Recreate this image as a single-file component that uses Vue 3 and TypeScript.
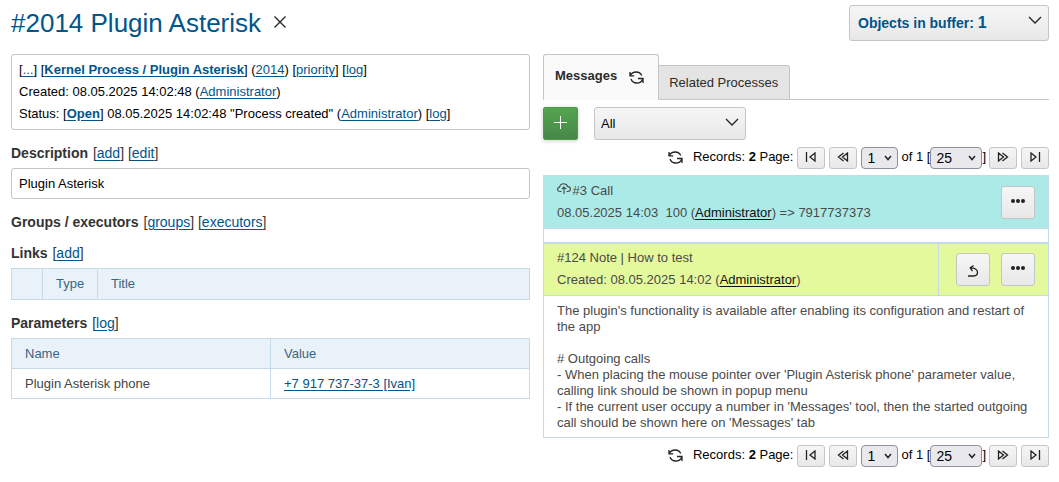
<script setup lang="ts">
import { ref } from 'vue'

const filters = ['All', 'Calls', 'Notes']
const filter = ref('All')
const page = ref('1')
const pageSize = ref('25')
const pagers = ['top', 'bottom']

const noteText = `The plugin's functionality is available after enabling its configuration and restart of the app

# Outgoing calls
- When placing the mouse pointer over 'Plugin Asterisk phone' parameter value, calling link should be shown in popup menu
- If the current user occupy a number in 'Messages' tool, then the started outgoing call should be shown here on 'Messages' tab`
</script>

<template>
  <div class="page">
    <header class="top">
      <h1>#2014 Plugin Asterisk</h1>
      <button class="plain" type="button" aria-label="Close">
        <svg width="12" height="12" viewBox="0 0 12 12"><path d="M.5.5l11 11M11.5.5l-11 11" /></svg>
      </button>
      <button class="btn buffer" type="button">
        <span>Objects in buffer: <b>1</b></span>
        <svg width="14" height="8" viewBox="0 0 14 8"><path d="M1 1l6 6 6-6" /></svg>
      </button>
    </header>

    <main class="columns">
      <section class="left">
        <div class="box info">
          <div>[<a href="#">...</a>] [<a href="#"><b>Kernel Process / Plugin Asterisk</b></a>] (<a href="#">2014</a>) [<a href="#">priority</a>] [<a href="#">log</a>]</div>
          <div>Created: 08.05.2025 14:02:48 (<a href="#">Administrator</a>)</div>
          <div>Status: [<a href="#"><b>Open</b></a>] 08.05.2025 14:02:48 "Process created" (<a href="#">Administrator</a>) [<a href="#">log</a>]</div>
        </div>

        <h2>Description <span>[<a href="#">add</a>] [<a href="#">edit</a>]</span></h2>
        <div class="box description">Plugin Asterisk</div>

        <h2 class="alone">Groups / executors <span>[<a href="#">groups</a>] [<a href="#">executors</a>]</span></h2>

        <h2>Links <span>[<a href="#">add</a>]</span></h2>
        <table class="grid links">
          <thead>
            <tr><th class="mark"></th><th class="type">Type</th><th>Title</th></tr>
          </thead>
        </table>

        <h2>Parameters <span>[<a href="#">log</a>]</span></h2>
        <table class="grid params">
          <thead>
            <tr><th>Name</th><th>Value</th></tr>
          </thead>
          <tbody>
            <tr><td>Plugin Asterisk phone</td><td><a href="#">+7 917 737-37-3 [Ivan]</a></td></tr>
          </tbody>
        </table>
      </section>

      <section class="right">
        <nav class="tabs">
          <button class="tab active" type="button">
            Messages
            <svg class="reload" width="15" height="13" viewBox="0 0 15 13"><path d="M1 1v3.8h4.2M1.3 4.5C2.5 2 4.8 1 7.2 1c2.6 0 4.6 1.3 5.500 3.500M14 12V7.500H9M13.700 8.200c-1 2.600-3.300 3.800-6 3.800-2.800 0-4.800-1.500-5.700-4" /></svg>
          </button>
          <button class="tab" type="button">Related Processes</button>
        </nav>

        <div class="tools">
          <button class="add" type="button" aria-label="Add message">
            <svg width="13" height="13" viewBox="0 0 13 13"><path d="M6.500 0v13M0 6.500h13" /></svg>
          </button>
          <label class="filter">
            <select v-model="filter" class="btn" aria-label="Message filter">
              <option v-for="f in filters" :key="f">{{ f }}</option>
            </select>
            <svg width="14" height="8" viewBox="0 0 14 8"><path d="M1 1l6 6 6-6" /></svg>
          </label>
        </div>

        <template v-for="p in pagers" :key="p">
          <div class="pager">
            <button class="plain" type="button" aria-label="Refresh">
              <svg class="reload" width="15" height="13" viewBox="0 0 15 13"><path d="M1 1v3.8h4.2M1.3 4.5C2.5 2 4.8 1 7.2 1c2.6 0 4.6 1.3 5.500 3.500M14 12V7.500H9M13.700 8.200c-1 2.600-3.300 3.800-6 3.800-2.800 0-4.800-1.500-5.700-4" /></svg>
            </button>
            <span class="records">Records: <b>2</b> Page:</span>
            <button class="btn step" type="button" aria-label="First page">
              <svg width="12" height="10" viewBox="0 0 12 10"><path d="M1.500 0v10M10 1v8L5 5z" /></svg>
            </button>
            <button class="btn step" type="button" aria-label="Previous page">
              <svg width="12" height="10" viewBox="0 0 12 10"><path d="M6.500 1l-5 4 5 4M10.500 1v8l-5-4z" /></svg>
            </button>
            <label class="pick number">
              <select v-model="page" aria-label="Page"><option>1</option></select>
              <svg width="8" height="6" viewBox="0 0 8 6"><path d="M1 1l3 3.500L7 1" /></svg>
            </label>
            <span class="size">of 1 [<label class="pick count">
              <select v-model="pageSize" aria-label="Page size"><option>25</option><option>50</option></select>
              <svg width="8" height="6" viewBox="0 0 8 6"><path d="M1 1l3 3.500L7 1" /></svg>
            </label>]</span>
            <button class="btn step" type="button" aria-label="Next page">
              <svg width="12" height="10" viewBox="0 0 12 10"><path d="M5.500 1l5 4-5 4M1.500 1v8l5-4z" /></svg>
            </button>
            <button class="btn step" type="button" aria-label="Last page">
              <svg width="12" height="10" viewBox="0 0 12 10"><path d="M10.500 0v10M2 1v8l5-4z" /></svg>
            </button>
          </div>

          <div v-if="p === 'top'" class="messages">
            <article>
              <div class="head call">
                <div class="summary">
                  <div>
                    <svg class="cloud" width="14" height="12" viewBox="0 0 14 12"><path d="M4.500 8.500H3.200C1.600 8.500.6 7.500.6 6.200c0-1.200.9-2 2-2.100C2.900 2 4.500.7 6.700.7c2 0 3.400 1.200 3.900 2.900 1.600.1 2.800 1 2.800 2.400 0 1.500-1.100 2.500-2.700 2.500H9.500M7 11V4M4.800 6.200L7 4l2.200 2.200" /></svg>
                    #3 Call
                  </div>
                  <div>08.05.2025 14:03&nbsp; 100 (<a href="#">Administrator</a>) =&gt; 7917737373</div>
                </div>
                <div class="actions">
                  <button class="btn" type="button" aria-label="More">
                    <svg class="dots" width="14" height="4" viewBox="0 0 14 4"><circle cx="2" cy="2" r="2" /><circle cx="7" cy="2" r="2" /><circle cx="12" cy="2" r="2" /></svg>
                  </button>
                </div>
              </div>
              <div class="empty"></div>
            </article>
            <article>
              <div class="head note">
                <div class="summary">
                  <div>#124 Note | How to test</div>
                  <div>Created: 08.05.2025 14:02 (<a href="#">Administrator</a>)</div>
                </div>
                <div class="actions">
                  <button class="btn" type="button" aria-label="Reply">
                    <svg class="reply" width="12" height="12" viewBox="0 0 12 12"><path d="M6.500.5L3.200 3l2.300 3.200M3.200 3c4.500-.3 7.300 1.400 7.300 4.300 0 2.200-1.600 3.700-3.800 3.700H1" /></svg>
                  </button>
                  <button class="btn" type="button" aria-label="More">
                    <svg class="dots" width="14" height="4" viewBox="0 0 14 4"><circle cx="2" cy="2" r="2" /><circle cx="7" cy="2" r="2" /><circle cx="12" cy="2" r="2" /></svg>
                  </button>
                </div>
              </div>
              <div class="text">{{ noteText }}</div>
            </article>
          </div>
        </template>
      </section>
    </main>
  </div>
</template>

<style>
body {
  margin: 0;
  background: #fff;
}
</style>

<style scoped>
.page {
  box-sizing: border-box;
  padding: 5px 10px 15px 11px;
  font: 13px/22px "Liberation Sans", Arial, sans-serif;
  color: #000;
}
.page *,
.page *::before {
  box-sizing: border-box;
}
button,
select {
  font: inherit;
  color: inherit;
  margin: 0;
  padding: 0;
}
svg {
  display: block;
  fill: none;
  stroke: #222;
  stroke-width: 1.3;
}
a {
  color: #00558b;
  text-underline-offset: 2px;
}
.plain {
  border: 0;
  background: none;
}
.btn {
  border: 1px solid #c5c5c5;
  border-radius: 3px;
  background: linear-gradient(#f6f6f6, #e8e8e8);
}
.top {
  display: flex;
  align-items: center;
  gap: 13px;
  height: 36px;
}
h1 {
  margin: 0;
  font-size: 26px;
  line-height: 36px;
  font-weight: 400;
  color: #00558b;
}
.top .plain {
  padding-bottom: 2px;
}
.buffer {
  display: flex;
  justify-content: space-between;
  align-items: center;
  width: 200px;
  height: 36px;
  margin-left: auto;
  padding: 0 6px 0 8px;
  font-size: 14px;
  font-weight: 700;
  color: #00558b;
}
.buffer b {
  font-size: 16px;
}
.buffer svg {
  margin-bottom: 6px;
}
.columns {
  display: grid;
  grid-template-columns: 519fr 506fr;
  gap: 13px;
  margin-top: 13px;
}
.left,
.right {
  min-width: 0;
}
.box {
  border: 1px solid #c5c5c5;
  border-radius: 3px;
  padding: 4px 7px;
}
.description {
  line-height: 21px;
}
h2 {
  margin: 15px 0 7px;
  font-size: 14px;
  line-height: 16px;
  color: #333;
}
h2 span {
  margin-left: 1px;
  font-weight: 400;
}
h2.alone {
  margin-bottom: 0;
}
.grid {
  width: 100%;
  table-layout: fixed;
  border-collapse: collapse;
  color: #444;
}
.grid th,
.grid td {
  height: 30px;
  padding: 0 13px;
  border: 1px solid #c5dbe9;
  text-align: left;
  font-weight: 400;
}
.grid th {
  background: #e9f2f9;
  color: #3b6480;
}
.links th {
  height: 31px;
}
.mark {
  width: 31px;
}
.type {
  width: 55px;
}
.tabs {
  display: flex;
  align-items: flex-end;
  height: 46px;
  border-bottom: 1px solid #c5c5c5;
}
.tab {
  height: 35px;
  padding: 0 11px 0 10px;
  border: 1px solid #c5c5c5;
  border-left: 0;
  border-radius: 0 3px 0 0;
  background: #e4e4e4;
  color: #2b2b2b;
  margin-bottom: -1px;
}
.tab.active {
  display: flex;
  gap: 12px;
  height: 46px;
  padding: 10px 14px 0 11px;
  border-left: 1px solid #c5c5c5;
  border-bottom-color: #fafafa;
  border-radius: 3px 3px 0 0;
  background: #fafafa;
  font-weight: 700;
}
.active svg {
  margin-top: 6px;
}
.tools {
  display: flex;
  gap: 16px;
  margin-top: 7px;
}
.add {
  display: flex;
  align-items: center;
  justify-content: center;
  width: 35px;
  height: 33px;
  padding-bottom: 2px;
  border: 1px solid #4a9f42;
  border-radius: 2px;
  background: linear-gradient(#55a550, #468748);
  box-shadow: 0 1px 4px #0003;
}
.add svg {
  stroke: #fff;
  stroke-width: 1;
}
.filter,
.pick {
  position: relative;
  display: inline-block;
}
.filter select {
  appearance: none;
  width: 152px;
  height: 33px;
  padding: 0 6px;
  display: block;
}
.filter svg {
  position: absolute;
  right: 7px;
  top: 11px;
  pointer-events: none;
}
.pager {
  display: flex;
  justify-content: flex-end;
  align-items: center;
  gap: 4px;
  height: 22px;
  margin: 7px 0 6px;
  line-height: 20px;
}
.pager .plain,
.records {
  padding-bottom: 2px;
}
.records {
  margin-left: 6px;
}
.records,
.size {
  white-space: nowrap;
}
.step {
  display: flex;
  align-items: center;
  justify-content: center;
  width: 28px;
  height: 22px;
  padding-bottom: 2px;
}
.size {
  display: flex;
  margin: 0 -1px;
}
.pick select {
  appearance: none;
  display: block;
  width: 100%;
  height: 22px;
  padding: 0 5px;
  border: 1px solid #8f8f9d;
  border-radius: 4px;
  background: #e9e9ed;
  font-size: 14px;
}
.pick svg {
  position: absolute;
  right: 6px;
  top: 8px;
  stroke-width: 1.5;
  pointer-events: none;
}
.number {
  width: 37px;
}
.count {
  width: 52px;
}
.messages {
  border: 1px solid #c5dbe9;
  color: #4a4a4a;
}
.messages a {
  color: #111;
}
.head {
  display: flex;
  border-bottom: 1px solid #c5dbe9;
}
.summary {
  flex: 1;
}
.call {
  background: #abeae6;
}
.note {
  background: #e4f99c;
}
.cloud {
  display: inline-block;
  stroke: #4a4a4a;
  stroke-width: 1.1;
  margin-right: -2px;
}
.call .summary {
  padding: 4px 13px;
}
.note .summary {
  padding: 3px 13px 4px;
}
.actions {
  display: flex;
  align-items: center;
  gap: 11px;
  padding: 0 13px 0 17px;
  border-left: 1px solid #c5dbe9;
}
.actions .btn {
  display: flex;
  align-items: center;
  justify-content: center;
  width: 34px;
  height: 33px;
  padding-bottom: 3px;
}
.dots {
  fill: #222;
  stroke: none;
}
.actions .reply {
  margin-top: 6px;
}
.empty {
  height: 14px;
  border-bottom: 1px solid #c5dbe9;
}
article + article {
  border-top: 1px solid #c5dbe9;
}
.text {
  padding: 7px 13px 6px;
  line-height: 16px;
  white-space: pre-line;
}
</style>
